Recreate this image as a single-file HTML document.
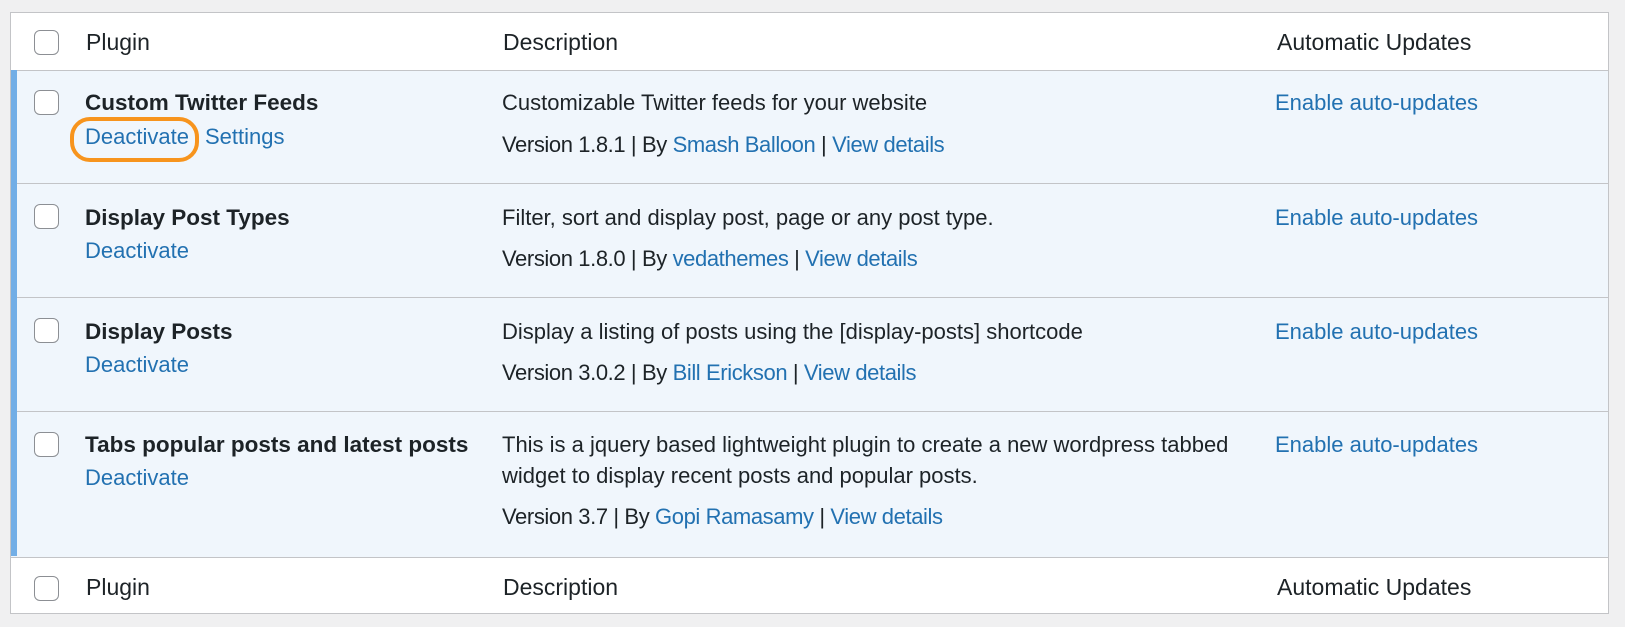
<!DOCTYPE html>
<html><head><meta charset="utf-8"><style>
body{margin:0;width:1625px;height:627px;background:#f0f0f1;font-family:"Liberation Sans",sans-serif;font-size:22px;color:#1d2327;position:relative;overflow:hidden}
.t{position:absolute;line-height:26px;white-space:nowrap}
.h{font-size:23px}
.v{letter-spacing:-0.4px}
.box{position:absolute;left:10px;top:12px;width:1599px;height:602px;background:#fff;border:1px solid #c3c4c7;box-sizing:border-box}
.row{position:absolute;left:11px;width:1597px;background:#f0f6fc;border-top:1px solid #c3c4c7}
.bar{position:absolute;left:11px;top:70px;width:6px;height:486px;background:#72aee6}
.cb{position:absolute;left:34px;width:25px;height:25px;border:1.5px solid #8c8f94;border-radius:6px;background:#fff;box-sizing:border-box}
a{color:#2271b1;text-decoration:none}
b{font-weight:bold;font-size:22.5px}
.oval{position:absolute;left:70px;top:117px;width:129px;height:45px;border:4px solid #f7941d;border-radius:20px;box-sizing:border-box}
</style></head><body>
<div class="box"></div>
<div class="row" style="top:70px;height:113px"></div>
<div class="row" style="top:183px;height:114px"></div>
<div class="row" style="top:297px;height:114px"></div>
<div class="row" style="top:411px;height:145px;border-bottom:1px solid #c3c4c7"></div>
<div class="bar"></div>

<div class="cb" style="top:30px"></div>
<div class="t h" style="left:86px;top:29px">Plugin</div>
<div class="t h" style="left:503px;top:29px">Description</div>
<div class="t h" style="left:1277px;top:29px">Automatic Updates</div>

<div class="cb" style="top:90px"></div>
<div class="t" style="left:85px;top:90px"><b>Custom Twitter Feeds</b></div>
<div class="t" style="left:85px;top:124px"><a>Deactivate</a></div>
<div class="t" style="left:205px;top:124px"><a>Settings</a></div>
<div class="oval"></div>
<div class="t" style="left:502px;top:90px">Customizable Twitter feeds for your website</div>
<div class="t v" style="left:502px;top:132px">Version 1.8.1 | By <a>Smash Balloon</a> | <a>View details</a></div>
<div class="t" style="left:1275px;top:90px"><a>Enable auto-updates</a></div>

<div class="cb" style="top:204px"></div>
<div class="t" style="left:85px;top:205px"><b>Display Post Types</b></div>
<div class="t" style="left:85px;top:238px"><a>Deactivate</a></div>
<div class="t" style="left:502px;top:205px">Filter, sort and display post, page or any post type.</div>
<div class="t v" style="left:502px;top:246px">Version 1.8.0 | By <a>vedathemes</a> | <a>View details</a></div>
<div class="t" style="left:1275px;top:205px"><a>Enable auto-updates</a></div>

<div class="cb" style="top:318px"></div>
<div class="t" style="left:85px;top:319px"><b>Display Posts</b></div>
<div class="t" style="left:85px;top:352px"><a>Deactivate</a></div>
<div class="t" style="left:502px;top:319px">Display a listing of posts using the [display-posts] shortcode</div>
<div class="t v" style="left:502px;top:360px">Version 3.0.2 | By <a>Bill Erickson</a> | <a>View details</a></div>
<div class="t" style="left:1275px;top:319px"><a>Enable auto-updates</a></div>

<div class="cb" style="top:432px"></div>
<div class="t" style="left:85px;top:432px"><b>Tabs popular posts and latest posts</b></div>
<div class="t" style="left:85px;top:465px"><a>Deactivate</a></div>
<div class="t" style="left:502px;top:432px">This is a jquery based lightweight plugin to create a new wordpress tabbed</div>
<div class="t" style="left:502px;top:463px">widget to display recent posts and popular posts.</div>
<div class="t v" style="left:502px;top:504px">Version 3.7 | By <a>Gopi Ramasamy</a> | <a>View details</a></div>
<div class="t" style="left:1275px;top:432px"><a>Enable auto-updates</a></div>

<div class="cb" style="top:576px"></div>
<div class="t h" style="left:86px;top:574px">Plugin</div>
<div class="t h" style="left:503px;top:574px">Description</div>
<div class="t h" style="left:1277px;top:574px">Automatic Updates</div>
</body></html>
